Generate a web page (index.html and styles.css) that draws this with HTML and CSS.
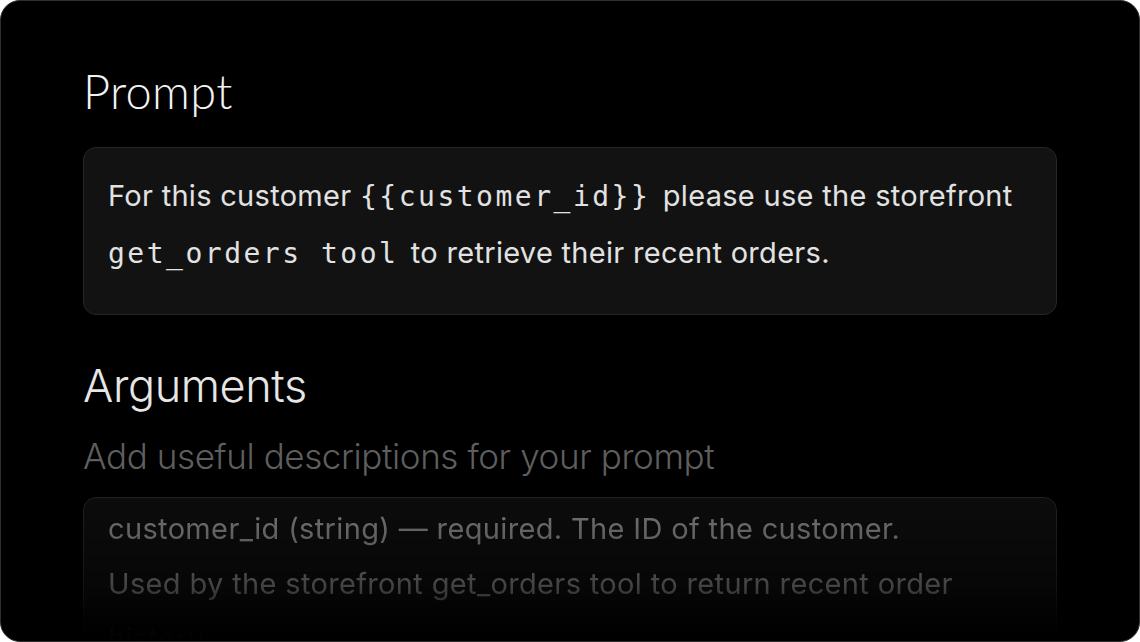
FILE: index.html
```html
<!DOCTYPE html>
<html lang="en">
<head>
<meta charset="utf-8">
<title>Prompt</title>
<link rel="stylesheet" href="styles.css">
</head>
<body>
<div class="card">
  <h2 class="title">Prompt</h2>
  <div class="prompt-box">
    <p class="prompt-text">For this customer <code class="code">{{customer_id}}</code> please use the storefront <code class="code">get_orders tool</code> to retrieve their recent orders.</p>
  </div>
  <h2 class="title title-args">Arguments</h2>
  <p class="subtitle">Add useful descriptions for your prompt</p>
  <div class="args-box">
    <p class="args-text">customer_id (string) — required. The ID of the customer.</p>
    <p class="args-text">Used by the storefront get_orders tool to return recent order history.</p>
  </div>
</div>
</body>
</html>
```
FILE: styles.css
```css
html, body {
  margin: 0;
  padding: 0;
  background: #ffffff;
}
.card {
  box-sizing: border-box;
  width: 1140px;
  height: 642px;
  background: #000000;
  border: 1px solid #2e2e2e;
  border-radius: 20px;
  padding: 0 82px;
  overflow: hidden;
}
.title {
  margin: 63px 0 0 0;
  font-family: Lato, "Noto Sans", sans-serif;
  font-weight: 300;
  font-size: 47px;
  line-height: 54px;
  color: #f2f2f2;
  letter-spacing: 0.3px;
}
.prompt-box {
  margin-top: 29px;
  height: 168px;
  box-sizing: border-box;
  background: #121212;
  border: 1px solid #262626;
  border-radius: 13px;
  padding: 20px 24px;
}
.prompt-text {
  margin: 0;
  font-family: Inter, "Noto Sans", sans-serif;
  font-size: 29px;
  line-height: 56px;
  color: #e2e2e2;
  letter-spacing: 0.3px;
}
.code {
  font-family: "DejaVu Sans Mono", monospace;
  font-size: 28px;
  letter-spacing: 2.5px;
  color: #e2e2e2;
  margin-right: 4px;
}
.title-args {
  margin-top: 44px;
  font-family: Inter, "Noto Sans", sans-serif;
  font-weight: 300;
  font-size: 45px;
  color: #e6e6e6;
  letter-spacing: -0.4px;
}
.subtitle {
  margin: 23px 0 0 0;
  font-family: Inter, "Noto Sans", sans-serif;
  font-weight: 300;
  font-size: 35px;
  line-height: 40px;
  color: #5e5e5e;
  letter-spacing: -0.4px;
}
.args-box {
  margin-top: 21px;
  height: 200px;
  box-sizing: border-box;
  background: #0c0c0c;
  border: 1px solid #222222;
  border-radius: 13px;
  padding: 3px 24px;
  -webkit-mask-image: linear-gradient(to bottom, #000 0px, rgba(0,0,0,0.55) 90px, rgba(0,0,0,0.06) 130px, transparent 145px);
  mask-image: linear-gradient(to bottom, #000 0px, rgba(0,0,0,0.55) 90px, rgba(0,0,0,0.06) 130px, transparent 145px);
}
.args-text {
  margin: 0;
  font-family: Inter, "Noto Sans", sans-serif;
  font-size: 29px;
  line-height: 55px;
  color: #787878;
  letter-spacing: 0.35px;
}
```
